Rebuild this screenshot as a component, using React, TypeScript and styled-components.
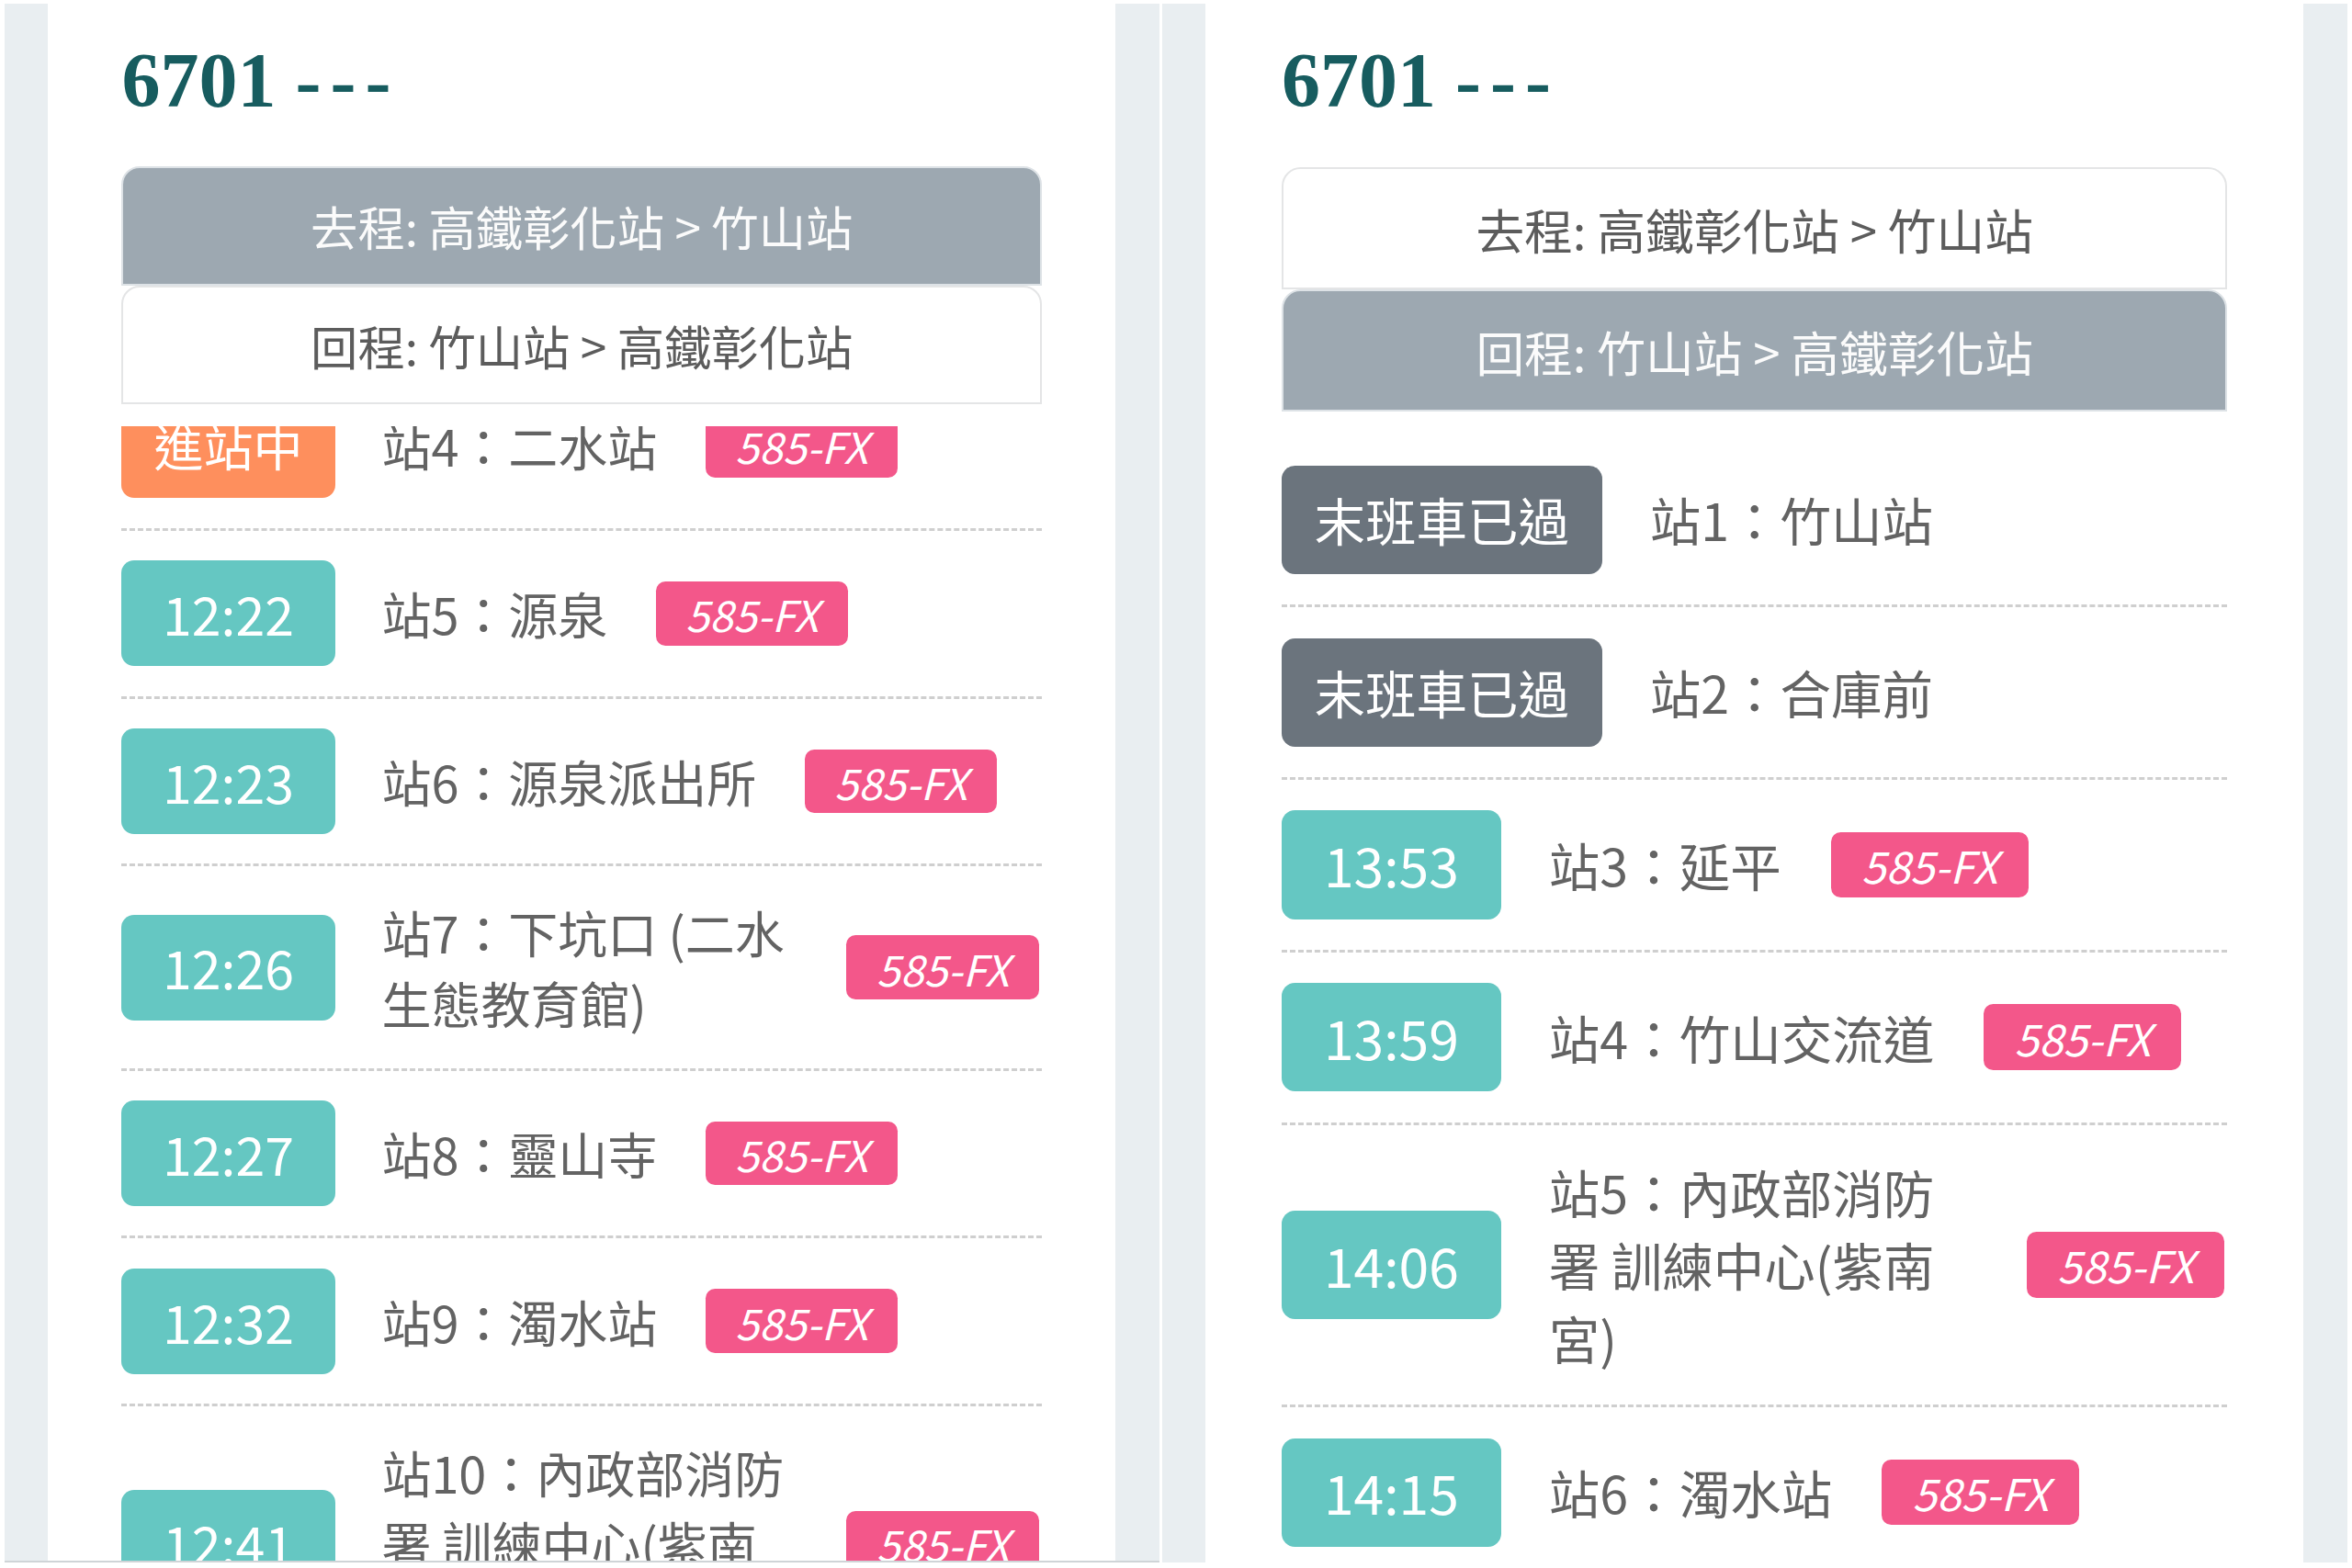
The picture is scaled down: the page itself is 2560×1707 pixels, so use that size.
import styled, { createGlobalStyle } from 'styled-components';

type Tone = 'arriving' | 'time' | 'ended';

interface Stop {
  status: string;
  tone: Tone;
  name: string;
  plate?: string;
}

interface RouteView {
  base: number;
  active: 'go' | 'back';
  scroll: number;
  stops: Stop[];
  edge?: boolean;
}

const GlobalStyle = createGlobalStyle`
  html, body {
    margin: 0;
    padding: 0;
    background: #ffffff;
  }
  body {
    font-family: 'Noto Sans CJK TC', 'Noto Sans', sans-serif;
  }
  * {
    box-sizing: border-box;
  }
`;

const toneColors: Record<Tone, string> = {
  arriving: '#fe8f5d',
  time: '#65c7c2',
  ended: '#6b747d',
};

const Page = styled.div`
  display: flex;
  gap: 3px;
  width: 2560px;
  height: 1707px;
  padding: 4px 5px 0;
  overflow: hidden;
`;

const Phone = styled.section<{ $base: number; $edge?: boolean }>`
  display: flex;
  justify-content: center;
  height: 1697px;
  padding: 0 48px 0 47px;
  background: #e9eef1;
  font-size: ${p => p.$base}px;
  overflow: hidden;
  border-bottom: ${p => (p.$edge ? '2px solid #cfd4d7' : 'none')};
`;

const Column = styled.div`
  display: flex;
  flex-direction: column;
  width: 21.53em;
  padding: 34px 1.49em 0;
  background: #ffffff;
`;

const Title = styled.h1`
  margin: 0;
  font-family: 'Liberation Serif', 'Times New Roman', serif;
  font-weight: 700;
  font-size: 84px;
  line-height: 1.2;
  color: #175c5f;
`;

const Dashes = styled.span`
  letter-spacing: 10px;
`;

const Tabs = styled.div`
  display: flex;
  flex-direction: column;
  margin-top: 0.78em;
`;

const Tab = styled.div<{ $active: boolean }>`
  display: flex;
  align-items: center;
  justify-content: center;
  height: 2.4em;
  border: 2px solid ${p => (p.$active ? '#dde2e6' : '#e4e5e6')};
  border-radius: 0.37em 0.37em 0 0;
  background: ${p => (p.$active ? '#9da8b1' : '#ffffff')};
  color: ${p => (p.$active ? '#fbfbfb' : '#5c5c5c')};
`;

const TabLabel = styled.span`
  font-size: 0.95em;
  white-space: nowrap;
`;

const Viewport = styled.div`
  flex: 1;
  margin-top: 0.45em;
  overflow: hidden;
`;

const StopList = styled.ul<{ $scroll: number }>`
  list-style: none;
  margin: ${p => -p.$scroll}em 0 0;
  padding: 0;
`;

const Row = styled.li`
  display: flex;
  align-items: center;
  padding: 0.6em 0;
  border-bottom: 3px dashed #cfcfcf;
`;

const StatusBox = styled.div<{ $tone: Tone }>`
  flex: none;
  display: flex;
  align-items: center;
  justify-content: center;
  min-width: 4.3em;
  height: 2.13em;
  padding: 0 0.64em;
  border-radius: 0.26em;
  background: ${p => toneColors[p.$tone]};
  color: #ffffff;
  line-height: 1;
  white-space: nowrap;
`;

const StatusText = styled.span<{ $tone: Tone }>`
  font-size: ${p => (p.$tone === 'time' ? '1.06em' : '1em')};
`;

const StopName = styled.div`
  max-width: 8.4em;
  margin-left: 0.94em;
  color: #636363;
  line-height: 1.43;
`;

const Plate = styled.span`
  flex: none;
  display: flex;
  align-items: center;
  height: 1.5em;
  margin-left: 1.13em;
  padding: 0 0.7em;
  border-radius: 0.22em;
  background: #f3578a;
  color: #ffffff;
  font-size: 0.86em;
  font-style: italic;
  white-space: nowrap;
`;

const views: RouteView[] = [
  {
    base: 54,
    active: 'go',
    scroll: 1.285,
    edge: true,
    stops: [
      { status: '進站中', tone: 'arriving', name: '站4：二水站', plate: '585-FX' },
      { status: '12:22', tone: 'time', name: '站5：源泉', plate: '585-FX' },
      { status: '12:23', tone: 'time', name: '站6：源泉派出所', plate: '585-FX' },
      { status: '12:26', tone: 'time', name: '站7：下坑口 (二水生態教育館)', plate: '585-FX' },
      { status: '12:27', tone: 'time', name: '站8：靈山寺', plate: '585-FX' },
      { status: '12:32', tone: 'time', name: '站9：濁水站', plate: '585-FX' },
      { status: '12:41', tone: 'time', name: '站10：內政部消防署 訓練中心(紫南宮)', plate: '585-FX' },
    ],
  },
  {
    base: 55.5,
    active: 'back',
    scroll: 0,
    stops: [
      { status: '末班車已過', tone: 'ended', name: '站1：竹山站' },
      { status: '末班車已過', tone: 'ended', name: '站2：合庫前' },
      { status: '13:53', tone: 'time', name: '站3：延平', plate: '585-FX' },
      { status: '13:59', tone: 'time', name: '站4：竹山交流道', plate: '585-FX' },
      { status: '14:06', tone: 'time', name: '站5：內政部消防署 訓練中心(紫南宮)', plate: '585-FX' },
      { status: '14:15', tone: 'time', name: '站6：濁水站', plate: '585-FX' },
    ],
  },
];

function RouteScreen({ view }: { view: RouteView }) {
  return (
    <Phone $base={view.base} $edge={view.edge}>
      <Column>
        <Title>
          6701 <Dashes>---</Dashes>
        </Title>
        <Tabs>
          <Tab $active={view.active === 'go'}>
            <TabLabel>去程: 高鐵彰化站 &gt; 竹山站</TabLabel>
          </Tab>
          <Tab $active={view.active === 'back'}>
            <TabLabel>回程: 竹山站 &gt; 高鐵彰化站</TabLabel>
          </Tab>
        </Tabs>
        <Viewport>
          <StopList $scroll={view.scroll}>
            {view.stops.map((stop, i) => (
              <Row key={i}>
                <StatusBox $tone={stop.tone}>
                  <StatusText $tone={stop.tone}>{stop.status}</StatusText>
                </StatusBox>
                <StopName>{stop.name}</StopName>
                {stop.plate && <Plate>{stop.plate}</Plate>}
              </Row>
            ))}
          </StopList>
        </Viewport>
      </Column>
    </Phone>
  );
}

export default function App() {
  return (
    <>
      <GlobalStyle />
      <Page>
        {views.map((view, i) => (
          <RouteScreen key={i} view={view} />
        ))}
      </Page>
    </>
  );
}
